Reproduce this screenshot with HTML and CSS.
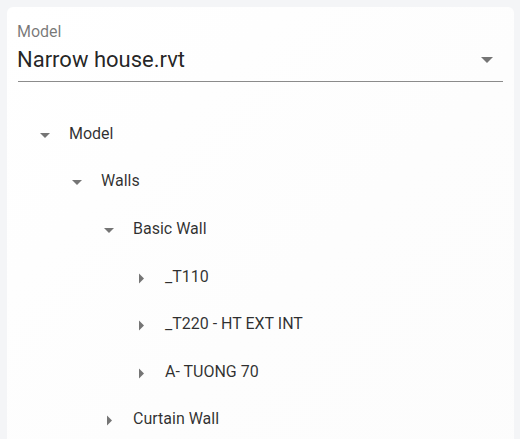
FILE: index.html
```html
<!DOCTYPE html>
<html lang="en">
<head>
<meta charset="utf-8">
<title>Model tree</title>
<link rel="stylesheet" href="styles.css">
</head>
<body>
<div class="card">
  <div class="field">
    <div class="field-label">Model</div>
    <div class="select">
      <span class="select-value">Narrow house.rvt</span>
      <svg class="select-arrow" width="12" height="6" viewBox="0 0 12 6"><polygon points="0,0 12,0 6,6" fill="#757575"/></svg>
    </div>
  </div>
  <ul class="tree">
    <li class="row lvl0"><svg class="tw" viewBox="0 0 24 24"><path d="M7 11l5 5 5-5z"/></svg><span>Model</span></li>
    <li class="row lvl1"><svg class="tw" viewBox="0 0 24 24"><path d="M7 11l5 5 5-5z"/></svg><span>Walls</span></li>
    <li class="row lvl2"><svg class="tw" viewBox="0 0 24 24"><path d="M7 11l5 5 5-5z"/></svg><span>Basic Wall</span></li>
    <li class="row lvl3"><svg class="tw" viewBox="0 0 24 24"><path d="M10 18.5l5-5-5-5z"/></svg><span>_T110</span></li>
    <li class="row lvl3"><svg class="tw" viewBox="0 0 24 24"><path d="M10 18.5l5-5-5-5z"/></svg><span>_T220 - HT EXT INT</span></li>
    <li class="row lvl3"><svg class="tw" viewBox="0 0 24 24"><path d="M10 18.5l5-5-5-5z"/></svg><span>A- TUONG 70</span></li>
    <li class="row lvl2"><svg class="tw" viewBox="0 0 24 24"><path d="M10 18.5l5-5-5-5z"/></svg><span>Curtain Wall</span></li>
  </ul>
</div>
</body>
</html>
```
FILE: styles.css
```css
html, body {
  margin: 0;
  padding: 0;
  background: #f4f5f7;
  height: 100%;
  overflow: hidden;
}
body {
  padding: 7px 6px 0 7px;
  font-family: Roboto, "Liberation Sans", sans-serif;
  color: rgba(0, 0, 0, 0.82);
}
.card {
  background: linear-gradient(135deg, #ffffff 0%, #fdfdfd 50%, #fcfcfc 100%);
  border-radius: 6px 6px 0 0;
  padding: 15px 11px 0 11px;
  height: 600px;
}
.field-label {
  font-size: 16px;
  line-height: 19px;
  color: rgba(0, 0, 0, 0.54);
  margin-left: -1px;
}
.select {
  margin-top: 6px;
  display: flex;
  align-items: center;
  justify-content: space-between;
  padding-bottom: 8px;
  border-bottom: 1px solid rgba(0, 0, 0, 0.45);
}
.select-value {
  font-size: 22px;
  line-height: 26px;
  margin-left: -1px;
  color: rgba(0, 0, 0, 0.87);
}
.select-arrow {
  margin-right: 10px;
  margin-top: -1px;
}
.tree {
  list-style: none;
  margin: 28px 0 0 0;
  padding: 0 0 0 15px;
}
.row {
  display: flex;
  align-items: center;
  height: 47.6px;
  font-size: 16px;
}
.row span {
  line-height: 20px;
}
.tw {
  width: 24px;
  height: 24px;
  fill: #757575;
  margin-right: 12px;
  flex: none;
}
.lvl1 { padding-left: 32px; }
.lvl2 { padding-left: 64px; }
.lvl3 { padding-left: 96px; }
```
